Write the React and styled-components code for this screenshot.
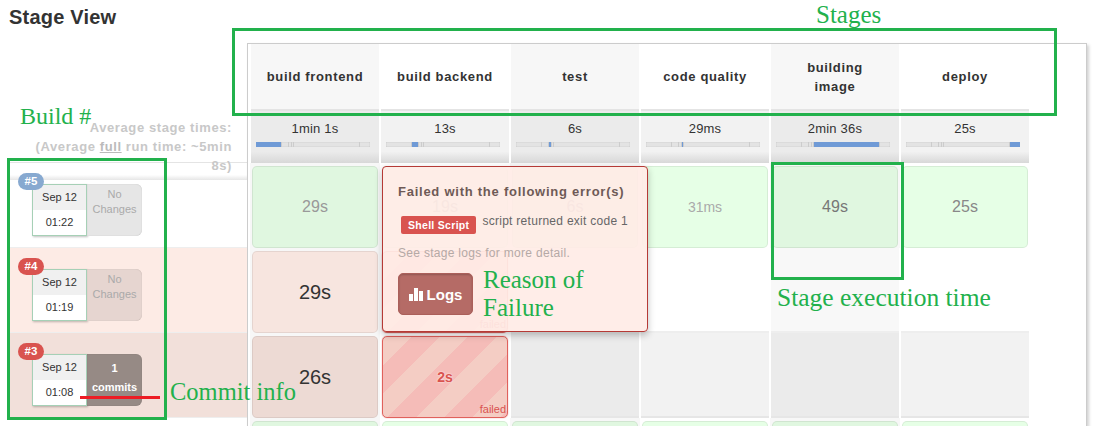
import React from 'react';
import styled, { createGlobalStyle } from 'styled-components';

const GlobalStyle = createGlobalStyle`
  html, body {
    margin: 0;
    padding: 0;
    background: #fff;
    font-family: "Liberation Sans", Arial, sans-serif;
    color: #333;
  }
`;

const Page = styled.div`
  position: relative;
  width: 1119px;
  height: 426px;
  overflow: hidden;
  background: #fff;
`;

const Title = styled.h2`
  margin: 0;
  padding: 6px 0 0 9px;
  height: 43px;
  box-sizing: border-box;
  font-size: 20px;
  line-height: 22px;
  font-weight: 700;
  letter-spacing: 0.2px;
  color: #333;
`;

const Layout = styled.div`
  display: flex;
  padding-left: 9px;
`;

const BuildColumn = styled.div`
  width: 238px;
  flex: none;
`;

const AverageLabel = styled.div`
  height: 120px;
  box-sizing: border-box;
  padding: 75px 15px 0 0;
  text-align: right;
  font-size: 13px;
  line-height: 19px;
  font-weight: 700;
  letter-spacing: 0.6px;
  color: #c8c8c8;
  border-bottom: 1px solid #e4e4e4;

  u {
    color: #bbb;
  }
`;

const LabelFade = styled.div`
  height: 17px;
  background: linear-gradient(to bottom, transparent 70%, #e6e6e6 100%);
`;

const BuildRow = styled.div`
  position: relative;
  height: ${({ $height }) => $height}px;
  box-sizing: border-box;
  padding-left: 23px;
  padding-top: ${({ $top }) => $top}px;
  background: ${({ $tint }) => $tint};
  border-bottom: 1px solid #eee;
`;

const BuildBadge = styled.span`
  position: absolute;
  left: 9px;
  top: ${({ $top }) => $top}px;
  width: 26px;
  height: 17px;
  border-radius: 9px;
  background: ${({ $color }) => $color};
  color: #fff;
  font-size: 11.5px;
  line-height: 17px;
  font-weight: 700;
  text-align: center;
`;

const BuildCard = styled.div`
  display: flex;
  width: 110px;
  height: 52px;
`;

const DateBox = styled.div`
  width: 55px;
  box-sizing: border-box;
  border: 1px solid #a6d0b6;
  box-shadow: 1px 1px 2px rgba(0, 0, 0, 0.25);
  background: #fff;
  font-size: 11px;
  color: #333;
  text-align: center;
`;

const DateLine = styled.div`
  height: 25px;
  line-height: 25px;
  background: #f0f0f0;
`;

const TimeLine = styled.div`
  height: 25px;
  line-height: 25px;
`;

const ChangesBox = styled.div`
  width: 55px;
  box-sizing: border-box;
  padding-top: ${({ $bold }) => ($bold ? 7 : 3)}px;
  border-radius: 0 6px 6px 0;
  background: ${({ $bg }) => $bg};
  box-shadow: inset 0 0 1px rgba(0, 0, 0, 0.25);
  color: ${({ $color }) => $color};
  font-size: 11px;
  font-weight: ${({ $bold }) => ($bold ? 700 : 400)};
  line-height: 15px;
  text-align: center;

  div + div {
    margin-top: ${({ $bold }) => ($bold ? 4 : 0)}px;
  }
`;

const Frame = styled.div`
  flex: none;
  width: 840px;
  height: 383px;
  box-sizing: border-box;
  padding-left: 2px;
  border: 1px solid #ccc;
  border-bottom: 0;
  box-shadow: 2px 2px 3px rgba(0, 0, 0, 0.18);
  background: #fff;
`;

const StageGrid = styled.div`
  display: grid;
  grid-template-columns: repeat(6, 130px);
  grid-template-rows: 67px 52px 85px 85px 85px 85px;
`;

const StageHead = styled.div`
  display: flex;
  align-items: center;
  justify-content: center;
  text-align: center;
  white-space: pre-line;
  background: ${({ $odd }) => ($odd ? '#f7f7f7' : '#fff')};
  border-bottom: 2px solid #e4e4e4;
  margin: 0 1px;
  font-size: 13px;
  line-height: 19px;
  font-weight: 700;
  letter-spacing: 0.65px;
  color: #333;
`;

const StageAverage = styled.div`
  margin: 0 1px;
  padding: 9px 7px 0;
  text-align: center;
  font-size: 13px;
  line-height: 18px;
  letter-spacing: 0.2px;
  color: #333;
  background: linear-gradient(to bottom, transparent 78%, #d8d8d8 100%), ${({ $odd }) => ($odd ? '#ebebeb' : '#f2f2f2')};
`;

const ProgressTrack = styled.div`
  display: flex;
  height: 5px;
  margin: 4px 2px 0 -2px;
  background: #e3e3e3;
  box-shadow: inset 0 0 1px rgba(0, 0, 0, 0.35);
`;

const ProgressPart = styled.div`
  box-sizing: border-box;
  background: ${({ $active }) => ($active ? '#6f9ad6' : 'transparent')};
  border-right: 1px solid #ccc;

  &:last-child {
    border-right: 0;
  }
`;

const StageSlot = styled.div`
  padding: 3px 2px 0;
  background: ${({ $odd }) => ($odd ? '#f7f7f7' : '#fff')};
`;

const GreySlot = styled.div`
  margin: 0 1px;
  background: ${({ $odd }) => ($odd ? '#ebebeb' : '#f2f2f2')};
  border-bottom: 2px solid #e6e6e6;
`;

const WhiteSlot = styled.div`
  margin: 0 1px;
  background: ${({ $odd }) => ($odd ? '#f8f8f8' : '#fff')};
  border-bottom: 2px solid #eee;
`;

const StageBox = styled.div`
  position: relative;
  height: 100%;
  box-sizing: border-box;
  display: flex;
  align-items: center;
  justify-content: center;
  border-radius: 5px;
  border: 1px solid rgba(0, 0, 0, 0.07);
  background: ${({ $bg }) => $bg};
  color: ${({ $color }) => $color};
  font-size: ${({ $size }) => $size}px;
`;

const FailedBox = styled(StageBox)`
  border: 1px solid #e0615c;
  background: repeating-linear-gradient(135deg, #f4cdc4 0 20px, #f5bcb8 20px 40px);
  color: #d9534f;
  font-weight: 700;
  font-size: 14px;
  text-shadow: 0 0 2px #fff;
  box-shadow: 0 0 1px #d9534f;
`;

const FailedTag = styled.span`
  position: absolute;
  right: 1px;
  bottom: 1px;
  font-size: 11px;
  font-weight: 400;
  line-height: 13px;
  text-shadow: none;
`;

const ErrorPopover = styled.div`
  position: absolute;
  left: 382px;
  top: 166px;
  width: 266px;
  height: 166px;
  box-sizing: border-box;
  padding: 16px 15px;
  border: 1px solid #b53a36;
  border-radius: 4px;
  background: rgba(255, 236, 230, 0.93);
  box-shadow: 0 3px 7px rgba(0, 0, 0, 0.25);
  font-size: 12px;
  color: #666;
`;

const ErrorTitle = styled.div`
  font-size: 13px;
  line-height: 18px;
  font-weight: 700;
  letter-spacing: 0.75px;
  color: #6e5a56;
`;

const ErrorLine = styled.div`
  display: flex;
  margin: 13px 0 0 3px;
  line-height: 14px;
  letter-spacing: 0.28px;
`;

const ShellTag = styled.span`
  height: 18px;
  margin: 2px 6px 0 0;
  padding: 0 7px;
  border-radius: 2px;
  background: #d9534f;
  color: #fff;
  font-size: 10.5px;
  line-height: 18px;
  font-weight: 700;
  letter-spacing: 0.3px;
`;

const ErrorHint = styled.div`
  margin-top: 11px;
  line-height: 16px;
  letter-spacing: 0.3px;
  color: #b5a9a6;
`;

const LogsButton = styled.div`
  display: flex;
  align-items: center;
  justify-content: center;
  gap: 4px;
  width: 75px;
  height: 42px;
  margin-top: 12px;
  box-sizing: border-box;
  border-radius: 5px;
  border: 1px solid #ab5f5a;
  background: #b56b66;
  box-shadow: inset 0 1px 2px rgba(0, 0, 0, 0.2);
  color: #fff;
  font-size: 15px;
  font-weight: 700;
`;

const NoteBox = styled.div`
  position: absolute;
  left: ${({ $x }) => $x}px;
  top: ${({ $y }) => $y}px;
  width: ${({ $w }) => $w}px;
  height: ${({ $h }) => $h}px;
  box-sizing: border-box;
  border: 3px solid #22b14c;
  pointer-events: none;
`;

const NoteText = styled.div`
  position: absolute;
  left: ${({ $x }) => $x}px;
  top: ${({ $y }) => $y}px;
  font-family: "Liberation Serif", "Times New Roman", serif;
  font-size: ${({ $size }) => $size}px;
  line-height: 28px;
  color: #22b14c;
  white-space: nowrap;
`;

const CommitMark = styled.div`
  position: absolute;
  left: 80px;
  top: 396px;
  width: 80px;
  height: 3px;
  background: #ed1c24;
`;

const stages = [
  { name: 'build frontend', avg: '1min 1s' },
  { name: 'build backend', avg: '13s' },
  { name: 'test', avg: '6s' },
  { name: 'code quality', avg: '29ms' },
  { name: 'building\nimage', avg: '2min 36s' },
  { name: 'deploy', avg: '25s' },
];

const segments = [26, 6, 3, 1, 68, 10];

const firstRow = [
  { text: '29s', color: '#999', size: 16, bg: '#e0f7e0' },
  { text: '19s', color: '#999', size: 16, bg: '#e6ffe6' },
  { text: '6s', color: '#999', size: 16, bg: '#e0f7e0' },
  { text: '31ms', color: '#aaa', size: 14, bg: '#e6ffe6' },
  { text: '49s', color: '#777', size: 16, bg: '#e0f7e0' },
  { text: '25s', color: '#888', size: 16, bg: '#e6ffe6' },
];

const builds = [
  { id: '#5', date: 'Sep 12', time: '01:22', badge: '#87a9d0', tint: '#fff', height: 68, cardTop: 4, badgeTop: -7, changes: ['No', 'Changes'], changeBg: '#e6e6e6', changeColor: '#aaa' },
  { id: '#4', date: 'Sep 12', time: '01:19', badge: '#d9534f', tint: '#fdebe5', height: 85, cardTop: 21, badgeTop: 10, changes: ['No', 'Changes'], changeBg: '#e6d5d0', changeColor: '#aaa' },
  { id: '#3', date: 'Sep 12', time: '01:08', badge: '#d9534f', tint: '#f2e0da', height: 85, cardTop: 21, badgeTop: 10, changes: ['1', 'commits'], changeBg: '#968a85', changeColor: '#fff', bold: true },
];

const BarsIcon = () => (
  <svg width="14" height="13" viewBox="0 0 14 13" fill="#fff" aria-hidden="true">
    <rect x="0" y="6" width="4" height="7" />
    <rect x="5" y="0" width="4" height="13" />
    <rect x="10" y="3" width="4" height="10" />
  </svg>
);

const BuildEntry = ({ build }) => (
  <BuildRow $height={build.height} $top={build.cardTop} $tint={build.tint}>
    <BuildBadge $top={build.badgeTop} $color={build.badge}>{build.id}</BuildBadge>
    <BuildCard>
      <DateBox>
        <DateLine>{build.date}</DateLine>
        <TimeLine>{build.time}</TimeLine>
      </DateBox>
      <ChangesBox $bg={build.changeBg} $color={build.changeColor} $bold={build.bold}>
        {build.changes.map((line) => (
          <div key={line}>{line}</div>
        ))}
      </ChangesBox>
    </BuildCard>
  </BuildRow>
);

const App = () => {
  return (
    <Page>
      <GlobalStyle />
      <Title>Stage View</Title>
      <Layout>
        <BuildColumn>
          <AverageLabel>
            Average stage times:
            <br />
            (Average <u>full</u> run time: ~5min
            <br />
            8s)
          </AverageLabel>
          <LabelFade />
          {builds.map((build) => (
            <BuildEntry key={build.id} build={build} />
          ))}
        </BuildColumn>
        <Frame>
          <StageGrid>
            {stages.map((stage, i) => (
              <StageHead key={stage.name} $odd={i % 2 === 0}>{stage.name}</StageHead>
            ))}
            {stages.map((stage, i) => (
              <StageAverage key={stage.name} $odd={i % 2 === 0}>
                {stage.avg}
                <ProgressTrack>
                  {segments.map((width, s) => (
                    <ProgressPart key={s} $active={s === i} style={{ flex: `${width} 0 0` }} />
                  ))}
                </ProgressTrack>
              </StageAverage>
            ))}
            {firstRow.map((cell, i) => (
              <StageSlot key={i} $odd={i % 2 === 0}>
                <StageBox $bg={cell.bg} $color={cell.color} $size={cell.size}>{cell.text}</StageBox>
              </StageSlot>
            ))}
            <StageSlot $odd>
              <StageBox $bg="#f7e5df" $color="#333" $size={20}>29s</StageBox>
            </StageSlot>
            <StageSlot>
              <FailedBox>2s<FailedTag>failed</FailedTag></FailedBox>
            </StageSlot>
            {[2, 3, 4, 5].map((i) => (
              <WhiteSlot key={i} $odd={i % 2 === 0} />
            ))}
            <StageSlot $odd>
              <StageBox $bg="#eddad4" $color="#333" $size={20}>26s</StageBox>
            </StageSlot>
            <StageSlot>
              <FailedBox>2s<FailedTag>failed</FailedTag></FailedBox>
            </StageSlot>
            {[2, 3, 4, 5].map((i) => (
              <GreySlot key={i} $odd={i % 2 === 0} />
            ))}
            {firstRow.map((cell, i) => (
              <StageSlot key={i} $odd={i % 2 === 0}>
                <StageBox $bg={cell.bg} $color={cell.color} $size={cell.size} />
              </StageSlot>
            ))}
          </StageGrid>
        </Frame>
      </Layout>

      <ErrorPopover>
        <ErrorTitle>Failed with the following error(s)</ErrorTitle>
        <ErrorLine>
          <ShellTag>Shell Script</ShellTag>
          script returned exit code 1
        </ErrorLine>
        <ErrorHint>See stage logs for more detail.</ErrorHint>
        <LogsButton><BarsIcon />Logs</LogsButton>
      </ErrorPopover>

      <NoteBox $x={232} $y={28} $w={825} $h={88} />
      <NoteBox $x={7} $y={158} $w={160} $h={262} />
      <NoteBox $x={771} $y={162} $w={133} $h={118} />
      <CommitMark />
      <NoteText $x={816} $y={1} $size={25}>Stages</NoteText>
      <NoteText $x={20} $y={102} $size={24}>Build #</NoteText>
      <NoteText $x={170} $y={378} $size={24.5}>Commit info</NoteText>
      <NoteText $x={483} $y={266} $size={25}>Reason of</NoteText>
      <NoteText $x={483} $y={294} $size={25}>Failure</NoteText>
      <NoteText $x={777} $y={284} $size={25.5}>Stage execution time</NoteText>
    </Page>
  );
};

export default App;
